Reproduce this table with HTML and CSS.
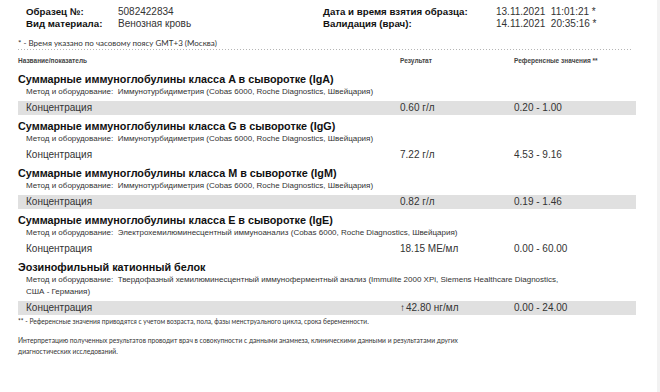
FILE: index.html
```html
<!DOCTYPE html>
<html lang="ru">
<head>
<meta charset="utf-8">
<title>Результаты</title>
<link rel="stylesheet" href="styles.css">
</head>
<body>
<div class="doc">
  <div class="info">
    <span class="lbl">Образец №:</span><span class="val">5082422834</span><span class="lbl">Дата и время взятия образца:</span><span class="val">13.11.2021&nbsp;&nbsp;11:01:21 *</span>
    <span class="lbl">Вид материала:</span><span class="val">Венозная кровь</span><span class="lbl">Валидация (врач):</span><span class="val">14.11.2021&nbsp;&nbsp;20:35:16 *</span>
  </div>
  <p class="note tz">* - Время указано по часовому поясу GMT+3 (Москва)</p>
  <div class="dots"></div>
  <div class="row head"><span>Название/показатель</span><span>Результат</span><span>Референсные значения **</span></div>

  <section class="test">
    <h2>Суммарные иммуноглобулины класса A в сыворотке (IgA)</h2>
    <p class="method">Метод и оборудование:&nbsp;&nbsp;Иммунотурбидиметрия (Cobas 6000, Roche Diagnostics, Швейцария)</p>
    <div class="row conc shade"><span>Концентрация</span><span>0.60 г/л</span><span>0.20 - 1.00</span></div>
  </section>

  <section class="test">
    <h2>Суммарные иммуноглобулины класса G в сыворотке (IgG)</h2>
    <p class="method">Метод и оборудование:&nbsp;&nbsp;Иммунотурбидиметрия (Cobas 6000, Roche Diagnostics, Швейцария)</p>
    <div class="row conc"><span>Концентрация</span><span>7.22 г/л</span><span>4.53 - 9.16</span></div>
  </section>

  <section class="test">
    <h2>Суммарные иммуноглобулины класса M в сыворотке (IgM)</h2>
    <p class="method">Метод и оборудование:&nbsp;&nbsp;Иммунотурбидиметрия (Cobas 6000, Roche Diagnostics, Швейцария)</p>
    <div class="row conc shade"><span>Концентрация</span><span>0.82 г/л</span><span>0.19 - 1.46</span></div>
  </section>

  <section class="test">
    <h2>Суммарные иммуноглобулины класса E в сыворотке (IgE)</h2>
    <p class="method">Метод и оборудование:&nbsp;&nbsp;Электрохемилюминесцентный иммуноанализ (Cobas 6000, Roche Diagnostics, Швейцария)</p>
    <div class="row conc"><span>Концентрация</span><span>18.15 МЕ/мл</span><span>0.00 - 60.00</span></div>
  </section>

  <section class="test">
    <h2>Эозинофильный катионный белок</h2>
    <p class="method">Метод и оборудование:&nbsp;&nbsp;Твердофазный хемилюминесцентный иммуноферментный анализ (Immulite 2000 XPi, Siemens Healthcare Diagnostics, США - Германия)</p>
    <div class="row conc shade"><span>Концентрация</span><span class="high"><span class="arrow">↑</span>42.80 нг/мл</span><span>0.00 - 24.00</span></div>
  </section>

  <p class="note small">** - Референсные значения приводятся с учетом возраста, пола, фазы менструального цикла, срока беременности.</p>
  <p class="note interp">Интерпретацию полученных результатов проводит врач в совокупности с данными анамнеза, клиническими данными и результатами других диагностических исследований.</p>
</div>
<div class="edge"></div>
</body>
</html>
```

FILE: styles.css
```css
html, body {
  margin: 0;
  height: 100%;
  background: #fff;
}
body {
  display: flex;
  font-family: "Liberation Sans", Arial, sans-serif;
  color: #222;
}
.doc {
  flex: 1;
  padding: 6px 21px 0 18px;
}
.edge {
  width: 3px;
  background: #f2f2f2;
}
.info {
  display: grid;
  grid-template-columns: 92px 205px 173px 1fr;
  padding-left: 8px;
  font-size: 10px;
  line-height: 12px;
}
.lbl {
  font-weight: bold;
  color: #111;
  font-size: 9.7px;
}
.val {
  color: #333;
}
.note {
  margin: 0;
  font-family: Lato, "Liberation Sans", sans-serif;
  color: #333;
}
.tz {
  margin-top: 7px;
  font-size: 8px;
  line-height: 12px;
}
.dots {
  height: 1px;
  margin-right: 4px;
  background: repeating-linear-gradient(to right, #b5b5b5 0 1px, transparent 1px 3px);
}
.row {
  display: grid;
  grid-template-columns: 382px 114px 1fr;
}
.head {
  margin-top: 6px;
  font-size: 6.5px;
  line-height: 10px;
  font-weight: bold;
  color: #444;
}
.test:first-of-type {
  margin-top: 6px;
}
.test + .test {
  margin-top: 4px;
}
.test h2 {
  margin: 0;
  font-size: 10.8px;
  line-height: 14px;
  font-weight: bold;
  color: #111;
}
.method {
  margin: 0;
  width: 540px;
  padding-left: 8px;
  font-size: 8px;
  line-height: 12px;
  color: #333;
}
.conc {
  margin-top: 3px;
  height: 14px;
  font-size: 10px;
  line-height: 14px;
  color: #333;
}
.conc > span:first-child {
  padding-left: 8px;
}
.shade {
  background: #e0e0e0;
}
.arrow {
  font-size: 10px;
  font-weight: bold;
  color: #222;
  margin-right: 1px;
}
.small {
  font-size: 6.6px;
  line-height: 12px;
}
.interp {
  margin-top: 8px;
  font-size: 6.7px;
  line-height: 11px;
  max-width: 470px;
}
```
